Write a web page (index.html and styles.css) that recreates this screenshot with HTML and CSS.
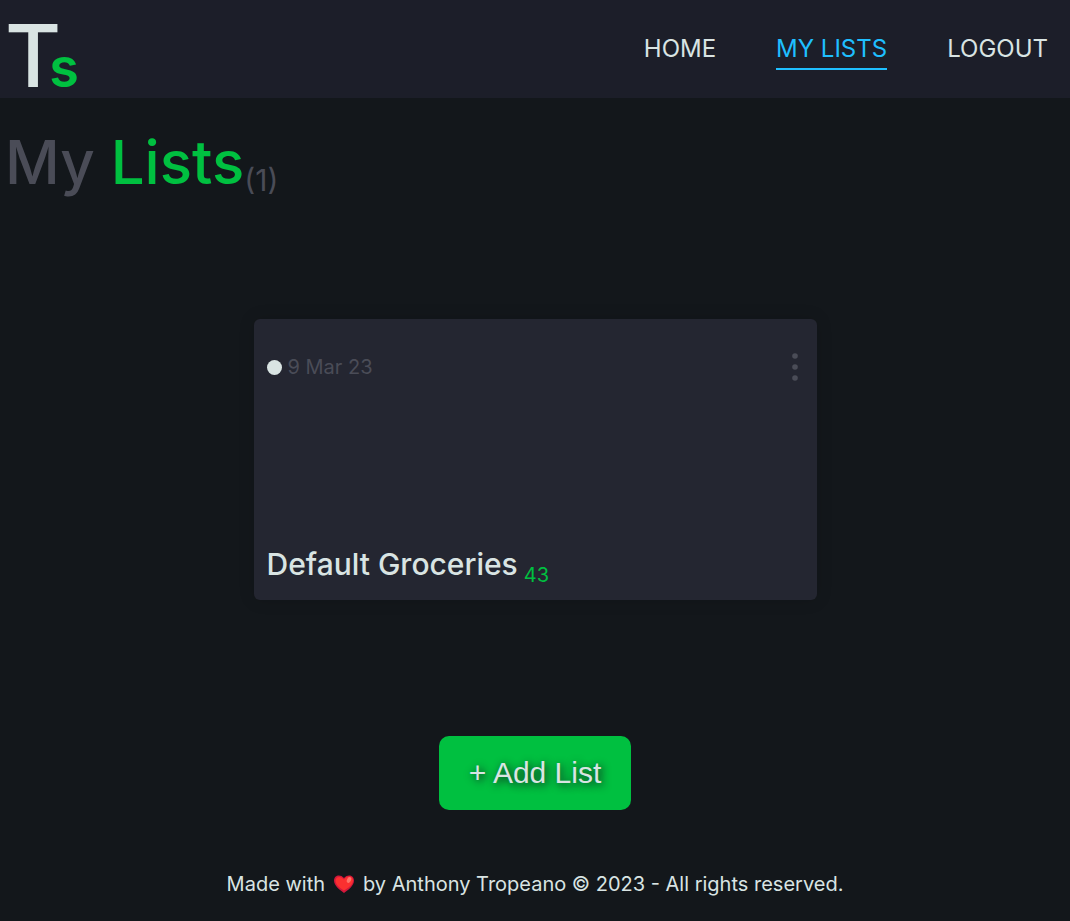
FILE: index.html
```html
<!DOCTYPE html>
<html lang="en">
<head>
<meta charset="utf-8">
<meta name="viewport" content="width=device-width, initial-scale=1">
<title>My Lists</title>
<link rel="stylesheet" href="styles.css">
</head>
<body>
<header class="site-header">
  <a class="logo" href="#">T<span class="logo-s">s</span></a>
  <nav class="nav">
    <a class="nav-link" href="#">HOME</a>
    <a class="nav-link active" href="#" aria-current="page">MY LISTS</a>
    <a class="nav-link" href="#">LOGOUT</a>
  </nav>
</header>
<main class="main">
  <h1 class="page-title">My <span class="accent">Lists</span><span class="total">(1)</span></h1>
  <article class="card">
    <div class="card-top">
      <span class="dot"></span>
      <time class="date" datetime="2023-03-09">9 Mar 23</time>
      <button class="menu" type="button" aria-label="List options">
        <svg width="6" height="28" viewBox="0 0 6 28" aria-hidden="true"><circle cx="3" cy="3" r="2.8"/><circle cx="3" cy="14" r="2.8"/><circle cx="3" cy="25" r="2.8"/></svg>
      </button>
    </div>
    <h2 class="card-title">Default Groceries<span class="count">43</span></h2>
  </article>
  <button class="add" type="button">+ Add List</button>
</main>
<footer class="footer">
  <span>Made with</span>
  <svg class="heart" width="22" height="20" viewBox="0 0 22 20" role="img" aria-label="love"><path fill="#d3183c" d="M11 19C7 16 1 12 1 6.500C1 1.500 7-.5 11 4C15-.5 21 1.500 21 6.500C21 12 15 16 11 19Z"/><path fill="#fb3030" d="M11 16.500C7 14 2.500 11 2.500 6.500C2.500 3 7 1 11 5.500C14 1 20 1.500 20 6.500C20 11 15 14 11 16.500Z"/><ellipse cx="16" cy="6" rx="2" ry="3" fill="#ff7468" transform="rotate(25 16 6)"/></svg>
  <span>by Anthony Tropeano © 2023 - All rights reserved.</span>
</footer>
</body>
</html>
```
FILE: styles.css
```css
* {
  box-sizing: border-box;
}

body {
  margin: 0;
  min-height: 100vh;
  display: flex;
  flex-direction: column;
  background: #13171b;
  color: #d9e4e3;
  font-family: Inter, "Liberation Sans", sans-serif;
}

.site-header {
  display: flex;
  align-items: center;
  justify-content: space-between;
  min-height: 98px;
  padding: 0 22px 0 5px;
  background: #1c1e29;
}

.logo {
  padding-top: 14px;
  color: #d9e4e3;
  font-size: 86px;
  font-weight: 500;
  line-height: 84px;
  text-decoration: none;
}

.logo-s {
  margin-left: -12px;
  color: #00c040;
  font-size: 54px;
  font-weight: 600;
  line-height: 1;
}

.nav {
  display: flex;
  gap: 60px;
  padding-top: 2px;
}

.nav-link {
  padding: 4px 0;
  border-bottom: 2px solid transparent;
  color: #d9e4e3;
  font-size: 24px;
  font-weight: 400;
  line-height: 30px;
  text-decoration: none;
}

.nav-link.active {
  border-color: #1fbfff;
  color: #1fbfff;
}

.main {
  display: flex;
  flex-direction: column;
  align-items: center;
}

.page-title {
  align-self: stretch;
  margin: 26px 0 0;
  padding: 0 5px;
  color: #4a4c57;
  font-size: 60px;
  font-weight: 500;
  line-height: 76px;
}

.accent {
  color: #00c040;
}

.total {
  position: relative;
  top: 7px;
  font-size: 30px;
  font-weight: 400;
  line-height: 1;
}

.card {
  display: flex;
  flex-direction: column;
  justify-content: space-between;
  width: 53%;
  max-width: 563px;
  min-height: 281px;
  margin-top: 119px;
  padding: 32px 13px 16px;
  border-radius: 6px;
  background: #242631;
  box-shadow: 0 0 16px rgba(0, 0, 0, .15);
}

.card-top {
  display: flex;
  align-items: center;
  gap: 6px;
}

.dot {
  width: 15px;
  height: 15px;
  border-radius: 50%;
  background: #d9e4e3;
}

.date {
  color: #4a4c57;
  font-size: 20px;
  font-weight: 400;
  line-height: 32px;
}

.menu {
  display: flex;
  margin-left: auto;
  padding: 2px 6px;
  border: 0;
  background: none;
  fill: #4a4c57;
  cursor: pointer;
}

.card-title {
  margin: 0;
  font-size: 30px;
  font-weight: 500;
  line-height: 40px;
}

.count {
  position: relative;
  top: 7px;
  margin-left: 6px;
  color: #00c040;
  font-size: 20px;
  font-weight: 400;
  line-height: 1;
}

.add {
  margin-top: 136px;
  padding: 20px 30px;
  border: 0;
  border-radius: 10px;
  background: #00c040;
  color: #d9e4e3;
  font-family: "Liberation Sans", Arial, sans-serif;
  font-size: 30px;
  line-height: 34px;
  text-shadow: 2px 2px 8px #13171b;
  cursor: pointer;
}

.footer {
  display: flex;
  flex-wrap: wrap;
  align-items: center;
  justify-content: center;
  gap: 8px;
  margin-top: 60px;
  font-size: 20px;
  line-height: 28px;
}
```
